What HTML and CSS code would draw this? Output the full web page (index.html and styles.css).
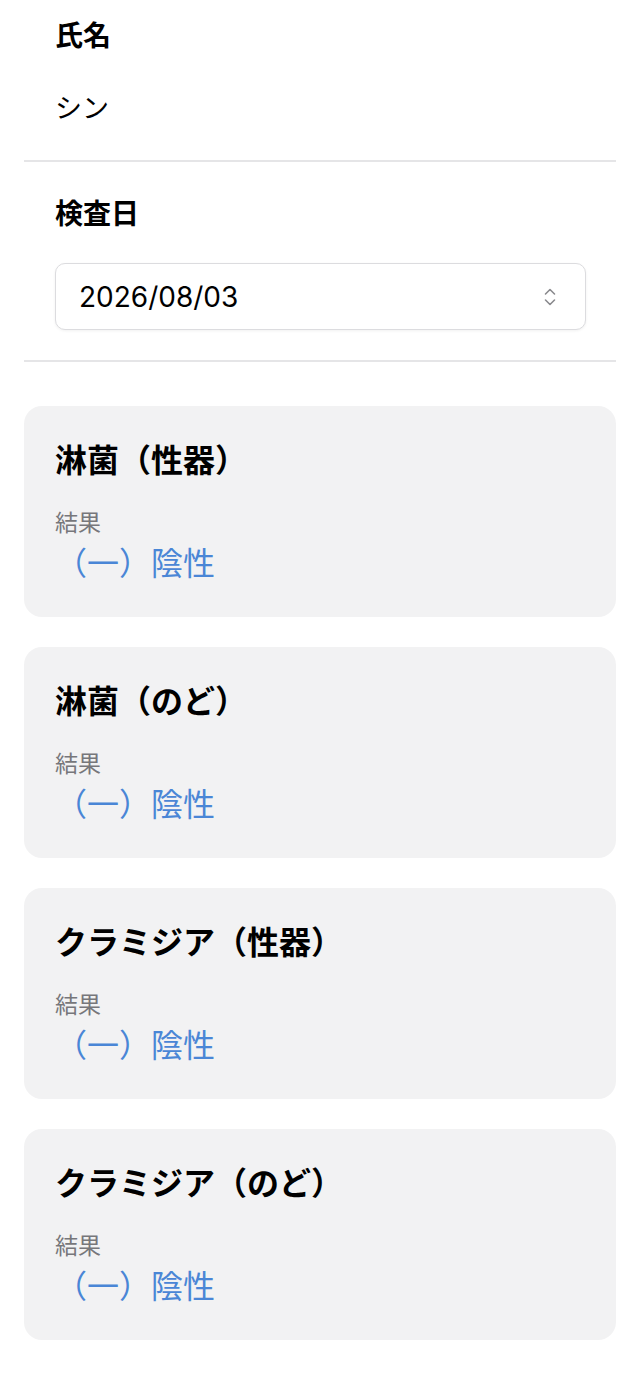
FILE: index.html
```html
<!DOCTYPE html>
<html lang="ja">
<head>
<meta charset="utf-8">
<title>検査結果</title>
<link rel="stylesheet" href="styles.css">
</head>
<body>
<main class="page">
  <section class="field field-name">
    <h2 class="field-label">氏名</h2>
    <p class="field-value">シン</p>
  </section>
  <section class="field field-date">
    <h2 class="field-label">検査日</h2>
    <div class="date-input">
      <span class="date-text">2026/08/03</span>
      <svg class="chevrons" width="14" height="20" viewBox="0 0 14 20" aria-hidden="true">
        <polyline points="2.5,7 7,2.5 11.5,7" fill="none" stroke="#8a8a8e" stroke-width="1.6" stroke-linecap="round" stroke-linejoin="round"/>
        <polyline points="2.5,13 7,17.5 11.5,13" fill="none" stroke="#8a8a8e" stroke-width="1.6" stroke-linecap="round" stroke-linejoin="round"/>
      </svg>
    </div>
  </section>
  <section class="results">
    <article class="card">
      <h3 class="card-title">淋菌（性器）</h3>
      <div class="card-label">結果</div>
      <div class="card-result">（一）陰性</div>
    </article>
    <article class="card">
      <h3 class="card-title">淋菌（のど）</h3>
      <div class="card-label">結果</div>
      <div class="card-result">（一）陰性</div>
    </article>
    <article class="card">
      <h3 class="card-title">クラミジア（性器）</h3>
      <div class="card-label">結果</div>
      <div class="card-result">（一）陰性</div>
    </article>
    <article class="card">
      <h3 class="card-title">クラミジア（のど）</h3>
      <div class="card-label">結果</div>
      <div class="card-result">（一）陰性</div>
    </article>
  </section>
</main>
</body>
</html>
```
FILE: styles.css
```css
* { box-sizing: border-box; }
html, body {
  margin: 0;
  padding: 0;
  background: #ffffff;
}
body {
  font-family: "Liberation Sans", "Noto Sans CJK JP", sans-serif;
  color: #000;
}
.page {
  padding: 0 24px;
  display: flex;
  flex-direction: column;
}
.field {
  padding: 0 31px;
  display: flex;
  flex-direction: column;
}
.field-name {
  padding-top: 16px;
  padding-bottom: 35px;
  border-bottom: 2px solid #e5e5e7;
}
.field-label {
  margin: 0;
  font-family: "Noto Sans CJK JP", sans-serif;
  font-size: 28px;
  font-weight: 700;
  line-height: 36px;
}
.field-value {
  margin: 37px 0 0;
  font-family: "Noto Sans CJK JP", sans-serif;
  font-size: 27px;
  font-weight: 400;
  line-height: 36px;
}
.field-date {
  padding-top: 32px;
  padding-bottom: 30px;
  padding-right: 30px;
  border-bottom: 2px solid #e5e5e7;
}
.date-input {
  margin-top: 33px;
  height: 67px;
  border: 1.5px solid #dcdcdf;
  border-radius: 10px;
  box-shadow: 0 1px 3px rgba(0,0,0,0.06);
  display: flex;
  align-items: center;
  justify-content: space-between;
  padding: 0 28px 0 23px;
  background: #fff;
}
.date-text {
  font-family: Inter, "Liberation Sans", sans-serif;
  font-size: 28px;
  line-height: 1;
}
.chevrons { display: block; }
.results {
  padding-top: 44px;
  display: flex;
  flex-direction: column;
  gap: 30px;
}
.card {
  background: #f2f2f3;
  border-radius: 18px;
  height: 211px;
  padding: 32px 31px 0;
  display: flex;
  flex-direction: column;
}
.card-title {
  margin: 0;
  font-family: "Noto Sans CJK JP", sans-serif;
  font-size: 32px;
  font-weight: 700;
  line-height: 40px;
}
.card-label {
  margin-top: 28px;
  font-family: "Noto Sans CJK JP", sans-serif;
  font-size: 23px;
  line-height: 30px;
  color: #77777b;
}
.card-result {
  margin-top: 5px;
  font-family: "Noto Sans CJK JP", sans-serif;
  font-size: 32px;
  line-height: 40px;
  color: #4a86d6;
}
```
